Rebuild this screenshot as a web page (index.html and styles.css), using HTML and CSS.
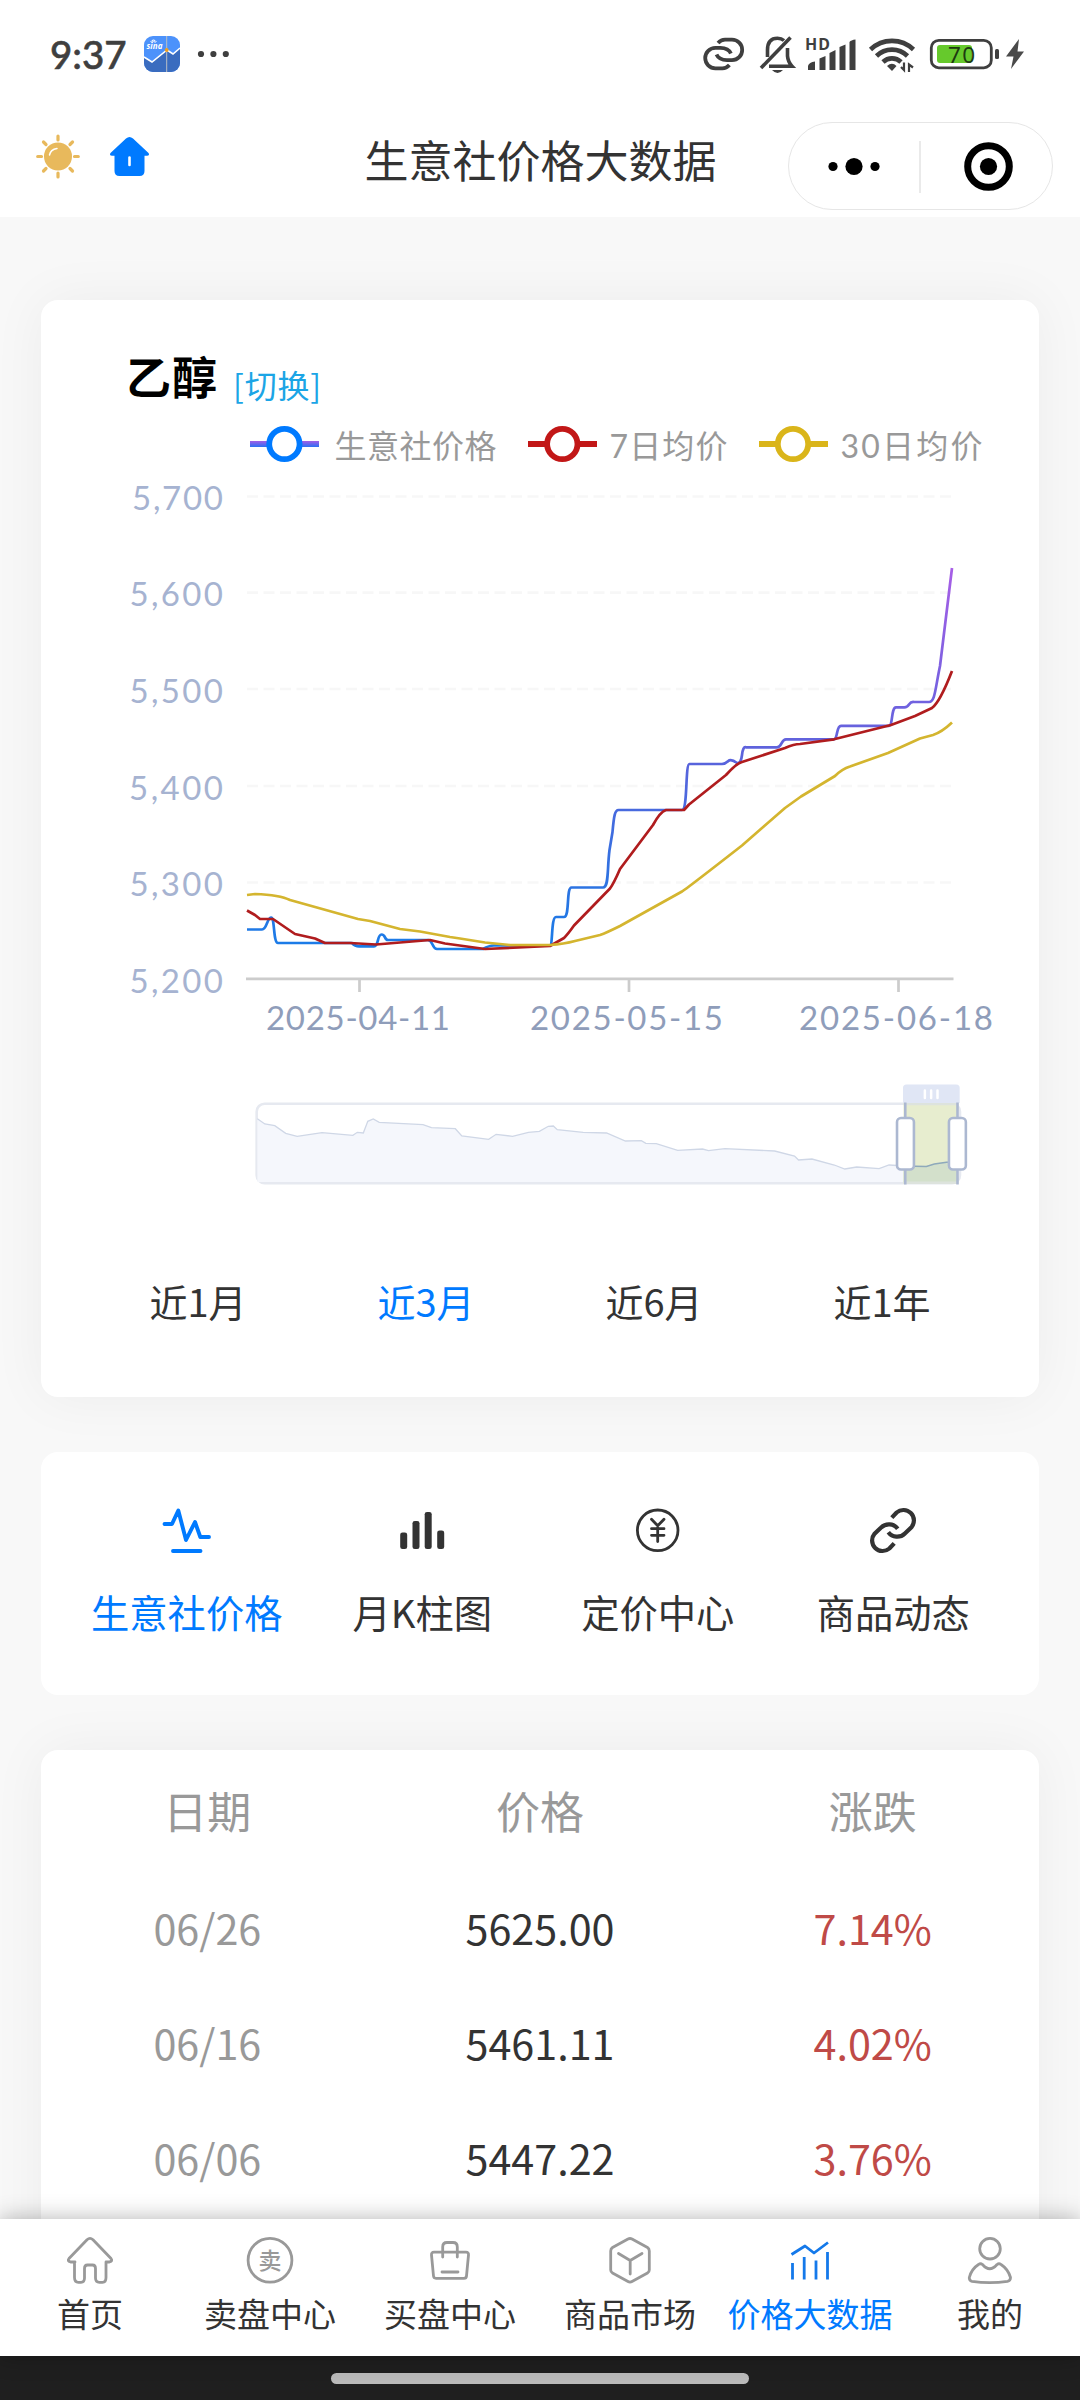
FILE: index.html
```html
<!DOCTYPE html>
<html lang="zh-CN">
<head>
<meta charset="utf-8">
<title>生意社价格大数据</title>
<link rel="stylesheet" href="styles.css">
</head>
<body>
<div class="app">
  <header class="header">
    <div class="status">
      <span class="clock">9:37</span>
      <svg class="app-badge" viewBox="0 0 36 36" width="36" height="36">
        <defs><clipPath id="badge"><rect width="36" height="36" rx="9"/></clipPath></defs>
        <g clip-path="url(#badge)">
          <rect width="36" height="36" fill="#4c92fb"/>
          <path d="M0 21 8 26 23 14 29 18 36 12V36H0z" fill="#3a6cbf"/>
          <path d="M0 21 8 26 23 14 29 18 36 12" fill="none" stroke="#fff" stroke-width="1.6"/>
          <path d="M22.7 0V36" stroke="#b9bfc6" stroke-width="1"/>
          <circle cx="22.7" cy="14" r="1.9" fill="#f0a020"/>
          <path d="M6.500 6q3-4 6 0M7.500 6.500q2-2.500 4 0" fill="none" stroke="#fff" stroke-width="1"/>
          <text x="2.500" y="13" class="badge-text" textLength="16">sina</text>
        </g>
      </svg>
      <svg class="more" viewBox="197 34 34 40" width="34" height="40" fill="#3f3f3f"><circle cx="201" cy="54" r="3.100"/><circle cx="213.400" cy="54" r="3.100"/><circle cx="225.800" cy="54" r="3.100"/></svg>
      <div class="status-right">
        <svg viewBox="700 34 56 40" width="56" height="40" fill="none" stroke="#3f3f3f" stroke-width="3.800">
          <path id="ring" d="M718 43Q721 39.700 725 39.700H732A10.200 10.200 0 0 1 732 60.100H727Q719 60 716.500 54.500"/>
          <use href="#ring" transform="rotate(180 723.700 54)"/>
        </svg>
        <svg viewBox="756 34 46 40" width="46" height="40" fill="none" stroke="#3f3f3f" stroke-width="3.600">
          <path d="M767.500 57V50Q767.500 38.300 777.500 38.300Q781.500 38.300 784 40.500M787.500 48V56Q788 62 792 66.200H769"/>
          <path d="M761 68 790.500 37.500"/><path d="M772 70H783Q777.500 76 772 70z" fill="#3f3f3f" stroke="none"/>
        </svg>
        <svg viewBox="802 34 62 40" width="62" height="40" fill="#3f3f3f">
          <text x="805" y="50" class="hd" textLength="25">HD</text>
          <path d="M808 70V66Q809 62 815 61.500V70zM819.500 70V58.500L825.500 56V70zM829.500 70V53L835.500 50V70zM839.500 70V47L845.500 44.500V70zM849.500 70V42Q851 40 855.500 39.500V70z"/>
        </svg>
        <svg viewBox="864 34 62 40" width="62" height="40" fill="none" stroke="#3f3f3f" stroke-width="4.600">
          <path d="M870.500 49.500A31 31 0 0 1 913.500 49.500M876.500 56A22 22 0 0 1 907.500 56M883 62A13 13 0 0 1 901 62"/>
          <path d="M887 66Q892 61.500 896.500 66L892 71z" fill="#3f3f3f" stroke="none"/>
          <path d="M904 62.500V70L901 67M909 72V64.500L913 67.500" stroke-width="2.200"/>
        </svg>
        <svg viewBox="926 34 102 40" width="102" height="40">
          <rect x="931.300" y="40.300" width="60" height="27.500" rx="7.500" fill="#fff" stroke="#3f3f3f" stroke-width="2.800"/>
          <rect x="937" y="45" width="35" height="18" rx="3" fill="#66c92c"/>
          <rect x="995" y="49" width="4" height="10" rx="1.500" fill="#3f3f3f"/>
          <text x="948" y="62.500" class="battery" textLength="27">70</text>
          <path d="M1019 39 1006 56.500H1013.500L1011 69 1024 51.500H1017.500z" fill="#4a4a4a"/>
        </svg>
      </div>
    </div>
    <div class="nav">
      <svg class="sun" viewBox="34 132 48 48" width="48" height="48" fill="none" stroke="#e8b95c" stroke-width="3.200" stroke-linecap="round">
        <circle cx="58" cy="156.500" r="14" fill="#e8b95c" stroke="none"/>
        <path d="M58 136V140M58 173V177M37.700 156.500H41.500M74.500 156.500H78.300M43.500 142 46 144.500M70 168.500 72.500 171M43.500 171 46 168.500M70 144.500 72.500 142"/>
        <path d="M49.500 155Q50.500 149.500 57 148.500" stroke="#fff" stroke-width="1.500"/>
      </svg>
      <svg class="home" viewBox="106 132 48 48" width="48" height="48">
        <path d="M126 138.500Q129.500 135.500 133 138.500L148.500 153Q150 155.500 147 155.700H144.500V171Q144.500 176 139.500 176H119.500Q114.500 176 114.500 171V155.700H112Q109 155.500 110.500 153z" fill="#007aff"/>
        <path d="M129.500 157.500V165" stroke="#fff" stroke-width="2.600" stroke-linecap="round"/>
      </svg>
      <h1 class="nav-title">生意社价格大数据</h1>
      <div class="capsule">
        <svg viewBox="788 122 265 87" width="265" height="87">
          <circle cx="833" cy="165.500" r="4.600"/><circle cx="854" cy="165.500" r="8.600"/><circle cx="875" cy="165.500" r="4.600"/>
          <path d="M920 140V192" stroke="#e3e3e3" stroke-width="1.500"/>
          <circle cx="988.500" cy="165.500" r="20.800" fill="none" stroke="#000" stroke-width="7"/><circle cx="988.500" cy="165.500" r="8.600"/>
        </svg>
      </div>
    </div>
  </header>

  <main class="main">
    <section class="card chart-card">
      <div class="chart-head"><h2 class="product">乙醇</h2><a class="switch">[切换]</a></div>
      <svg class="chart" viewBox="83 410 914 790" width="914" height="790">
        <defs>
          <linearGradient id="price" gradientUnits="userSpaceOnUse" x1="0" y1="568" x2="0" y2="949"><stop offset="0" stop-color="#a75ee6"/><stop offset=".5" stop-color="#5a63dc"/><stop offset=".85" stop-color="#2a74e2"/><stop offset="1" stop-color="#1a7ce8"/></linearGradient>
          <linearGradient id="key" gradientUnits="userSpaceOnUse" x1="0" y1="441" x2="0" y2="447"><stop offset="0" stop-color="#a25ee6"/><stop offset="1" stop-color="#2a70f4"/></linearGradient>
        </defs>
        <g stroke-width="5.800">
          <rect x="250" y="441" width="69" height="6" fill="url(#key)"/><circle cx="284.400" cy="444" r="15.200" fill="#fff" stroke="#007aff"/>
          <path d="M528 444H597" stroke="#c21717"/><circle cx="562.300" cy="444" r="15.200" fill="#fff" stroke="#c21717"/>
          <path d="M759 444H828" stroke="#dab51a"/><circle cx="793" cy="444" r="15.200" fill="#fff" stroke="#dab51a"/>
        </g>
        <g class="legend">
          <text x="334.500" y="457.500" textLength="162">生意社价格</text>
          <text x="609.500" y="457.500" textLength="118">7日均价</text>
          <text x="840.500" y="457.500" textLength="142">30日均价</text>
        </g>
        <g class="grid"><path d="M247 496.500H952M247 592.700H952M247 689H952M247 786H952M247 882.500H952"/></g>
        <g class="y-axis">
          <text x="132" y="510" textLength="91">5,700</text>
          <text x="129.500" y="606.200" textLength="93.500">5,600</text>
          <text x="129.500" y="702.500" textLength="93.500">5,500</text>
          <text x="129" y="799.500" textLength="94">5,400</text>
          <text x="129.500" y="896" textLength="93.500">5,300</text>
          <text x="129.500" y="992.500" textLength="93.500">5,200</text>
        </g>
        <path d="M246 978.800H953.500M359.500 978.800V992M629 978.800V992M898.500 978.800V992" stroke="#ccc" stroke-width="2.700" fill="none"/>
        <g class="x-axis">
          <text x="266" y="1030" textLength="184">2025-04-11</text>
          <text x="530" y="1030" textLength="193">2025-05-15</text>
          <text x="799" y="1030" textLength="194">2025-06-18</text>
        </g>
        <g fill="none" stroke-width="2.700" stroke-linejoin="round">
          <path stroke="url(#price)" d="M247 929.500H262C267 929.500 267 918 271 917.500S273 943 278 943H352Q355 946.300 359 946.300H374C379 946.300 377 934.500 381.500 934.500S384 940 388 940H428C433 940 432 949 437 949H483Q489 945.500 494 945.500H550C553 945 551 917 556 917H564C570 917 566 887.500 571.500 887.500H603C609 887.500 607 870 609.500 850L612.500 832C614 815 615 810 618.500 810H682C688 810 685 764 689.500 764H722Q725 764 728 761.200T737 763Q741 764 742 755T746 747.300H777C782 747.300 781 739.300 786 739.300H834C838 739.300 836 725.800 841 725.800H889C893 725.800 891 707.500 896 707.300H904Q907 707.500 909 704.500T914 702H929C935 702 935 690 940 666L952 568"/>
          <path stroke="#b01c1e" d="M247 910.500 255 915 260 919H273L295 934 315 938.500 325 943H350L376 944.500 430 940 445 943.500 485 949 550 946 564 938Q568 934 574 925.500L610 888.500Q614 883 620 869L653 825Q660 812 666 810H684L689 804.500 726 775Q737 763 742 762L785 748Q794 744 800 744L834 739.300 891 725 915 716 932 708Q940 702 952 671"/>
          <path stroke="#d4b52f" d="M247 895 255 894Q280 895 290 900L358 919 370 921 400 929 420 931.500 450 937 460 938.500 485 942.500 510 945H550Q564 944 575 941L600 935Q606 933 620 926L682 891.500Q685 890 742 845.500L785 808 801 796.500 835 776Q842 769 850 766.500L888 753 920 738.500 933 735Q942 732 952 722.500"/>
        </g>
        <g fill="none" transform="translate(1.200 0) scale(.9948 1)">
          <rect x="256.800" y="1103.700" width="707" height="79.500" rx="8" stroke="#e6e9f0" stroke-width="2.600"/>
          <path fill="#f5f7fc" d="M257.500 1118.700 265 1124 275 1125.700 286 1133.300 297.500 1136.300 322.500 1132.700 353.500 1135.300 358 1132.300 364 1133 368.500 1121.300 374 1119 380 1122.300 424 1124.700 432.500 1127.700 456.500 1128.700 463 1136 490 1139.300 497.500 1134.300 514 1136.300 530 1132.300 541 1131.300 550 1126.300 555 1126 559 1129.700 585 1132.300 608.500 1133 627.500 1141 643.500 1140.700 648 1143.300 658.500 1143.700 680 1150.300 705 1149 711 1150.700 727.500 1148.700 777.500 1151 797.500 1156 801.500 1160 815 1159 837.500 1165 848 1169 860 1167 882.500 1168.700 892.500 1165 908.500 1166V1182H257.500z"/>
          <path stroke="#cfd7e6" stroke-width="1.300" d="M257.500 1118.700 265 1124 275 1125.700 286 1133.300 297.500 1136.300 322.500 1132.700 353.500 1135.300 358 1132.300 364 1133 368.500 1121.300 374 1119 380 1122.300 424 1124.700 432.500 1127.700 456.500 1128.700 463 1136 490 1139.300 497.500 1134.300 514 1136.300 530 1132.300 541 1131.300 550 1126.300 555 1126 559 1129.700 585 1132.300 608.500 1133 627.500 1141 643.500 1140.700 648 1143.300 658.500 1143.700 680 1150.300 705 1149 711 1150.700 727.500 1148.700 777.500 1151 797.500 1156 801.500 1160 815 1159 837.500 1165 848 1169 860 1167 882.500 1168.700 892.500 1165 908.500 1166"/>
          <path d="M907 1103H962V1184H907z" fill="#e7edcf"/>
          <path d="M907 1166 930 1166.500 938 1164 952 1162 961 1160V1182H907z" fill="#d3e0cb"/>
          <path d="M907 1166 930 1166.500 938 1164 952 1162 961 1160" stroke="#8ea9bb" stroke-width="1.400"/>
          <path d="M907 1104H962M907 1182.700H962" stroke="#dde3dd" stroke-width="2.600"/>
          <path d="M906.500 1103V1088Q906.500 1084.500 910 1084.500H960Q963.500 1084.500 963.500 1088V1103z" fill="#e0e6f5"/>
          <path d="M928.500 1090.500V1098M934.800 1090.500V1098M941.200 1090.500V1098" stroke="#fff" stroke-width="2.500" stroke-linecap="round"/>
          <g stroke="#acb8d1" stroke-width="2.600">
            <path d="M908.800 1102.500V1184.500M961.300 1102.500V1184.500"/>
            <rect x="900.500" y="1118" width="17" height="51.500" rx="4" fill="#fff"/>
            <rect x="952.700" y="1118" width="17" height="51.500" rx="4" fill="#fff"/>
          </g>
        </g>
      </svg>
      <nav class="ranges"><a>近1月</a><a class="active">近3月</a><a>近6月</a><a>近1年</a></nav>
    </section>

    <section class="card tools">
      <a class="tool active">
        <svg viewBox="161 1504 52 52" width="52" height="52" fill="none" stroke="currentColor" stroke-width="3.900" stroke-linecap="round" stroke-linejoin="round"><path d="M164.500 1524H172L178.300 1510.500 186 1540 195 1522 200.300 1537H209M173 1551H200.500"/></svg>
        <span>生意社价格</span>
      </a>
      <a class="tool">
        <svg viewBox="396 1504 52 52" width="52" height="52" fill="currentColor"><rect x="400.200" y="1532.500" width="7" height="16.500" rx="2.300"/><rect x="412.500" y="1521" width="7" height="28" rx="2.300"/><rect x="424.700" y="1512" width="7" height="37" rx="2.300"/><rect x="437.200" y="1530.500" width="7" height="18.500" rx="2.300"/></svg>
        <span>月K柱图</span>
      </a>
      <a class="tool">
        <svg viewBox="632 1504 52 52" width="52" height="52" fill="none" stroke="currentColor" stroke-width="2.800" stroke-linecap="round"><circle cx="657.700" cy="1530.300" r="20.300"/><path d="M651.500 1519.200 657.700 1525.800 664 1519.200M657.700 1525.800V1541.500M651.500 1528.700H664M651.500 1535.300H664"/></svg>
        <span>定价中心</span>
      </a>
      <a class="tool">
        <svg viewBox="867.500 1504 52 52" width="52" height="52" fill="none" stroke="currentColor" stroke-width="4.200"><path id="link" d="M892.300 1517.700 897.100 1512.500A10.500 10.500 0 0 1 911.900 1527.300L905.400 1533.400A11 11 0 0 1 888.800 1532.200"/><use href="#link" transform="rotate(180 893.500 1530.500)"/></svg>
        <span>商品动态</span>
      </a>
    </section>

    <section class="card table-card">
      <div class="row head"><span>日期</span><span>价格</span><span>涨跌</span></div>
      <div class="row"><span class="date">06/26</span><span>5625.00</span><span class="up">7.14%</span></div>
      <div class="row"><span class="date">06/16</span><span>5461.11</span><span class="up">4.02%</span></div>
      <div class="row"><span class="date">06/06</span><span>5447.22</span><span class="up">3.76%</span></div>
    </section>
  </main>

  <nav class="tabbar">
    <a class="tab">
      <svg viewBox="64 2234 52 52" width="52" height="52"><path d="M75 2262H70.500Q67 2261 69 2258.500L87 2239.700Q90 2237 93 2239.700L111 2258.500Q113 2261 109.500 2262H106V2277.500Q106 2282.300 102.500 2282.300H99.500Q95.500 2282.300 95.500 2278V2268.500Q95.500 2265 92.500 2265H87.500Q84.500 2265 84.500 2268.500V2278Q84.500 2282.300 81 2282.300H78.500Q74.500 2282.300 74.500 2277.500V2262z"/></svg>
      <span>首页</span>
    </a>
    <a class="tab">
      <svg viewBox="244 2234 52 52" width="52" height="52"><circle cx="270" cy="2260.300" r="21.900"/><text x="270" y="2269" class="seal" text-anchor="middle">卖</text></svg>
      <span>卖盘中心</span>
    </a>
    <a class="tab">
      <svg viewBox="424 2234 52 52" width="52" height="52"><path d="M434 2252.200H466Q468.700 2252.200 468.500 2255L466.500 2276Q466.300 2278.300 464 2278.300H436Q433.700 2278.300 433.500 2276L431.500 2255Q431.300 2252.200 434 2252.200zM442.700 2257V2247Q442.700 2242.500 447 2242.500H453Q457.300 2242.500 457.300 2247V2257M442 2272H458"/></svg>
      <span>买盘中心</span>
    </a>
    <a class="tab">
      <svg viewBox="604 2234 52 52" width="52" height="52"><path d="M628 2239Q630 2238 632 2239L647.500 2247.500Q649.300 2248.700 649.300 2251V2270Q649.300 2272 647.500 2273L632 2281.500Q630 2282.700 628 2281.500L612.500 2273Q610.700 2272 610.700 2270V2251Q610.700 2248.700 612.500 2247.500zM618.500 2253.500 630.200 2260.500 642 2253.500M630.200 2260.500V2274"/></svg>
      <span>商品市场</span>
    </a>
    <a class="tab active">
      <svg viewBox="784 2234 52 52" width="52" height="52"><path d="M791.500 2254.500 805 2246 814 2253 828 2242.500M792.500 2263V2279.500M804.200 2257V2279.500M816 2260.500V2279.500M827.500 2252V2279.500"/></svg>
      <span>价格大数据</span>
    </a>
    <a class="tab">
      <svg viewBox="964 2234 52 52" width="52" height="52"><circle cx="990" cy="2248.700" r="10.300"/><path d="M978.500 2264.500Q980.500 2263 982.500 2264.500Q989.700 2273 997 2264.500Q999 2263 1001 2264.500Q1008 2269 1010.500 2277.500Q1010.500 2280.700 1007.500 2281.300Q989.700 2284 972 2281.300Q969 2280.700 969.300 2277.500Q971.500 2269 978.500 2264.500z"/></svg>
      <span>我的</span>
    </a>
  </nav>
  <footer class="gesture"><i class="pill"></i></footer>
</div>
</body>
</html>
```
FILE: styles.css
```css
* { box-sizing: border-box; }
body { margin: 0; font-family: "Noto Sans CJK SC", sans-serif; color: #333; background: #f8f8f8; }
svg { display: block; flex: none; }
h1, h2 { margin: 0; }
.app { width: 1080px; height: 2400px; display: flex; flex-direction: column; overflow: hidden; }

.header { height: 217px; flex: none; background: #fff; }
.status { height: 108px; padding: 0 52px 0 50px; display: flex; align-items: center; }
.clock { width: 94px; font: 500 38.5px/40px Lato, sans-serif; color: #3f3f3f; -webkit-text-stroke: .6px #3f3f3f; white-space: nowrap; }
.more { margin-left: 17px; }
.status-right { display: flex; margin-left: auto; }
.badge-text { font: italic bold 8px "Open Sans", sans-serif; fill: #fff; }
.hd { font: bold 16px "Noto Sans", sans-serif; }
.battery { font: 22.5px "Noto Sans", sans-serif; fill: #1d3a10; }

.nav { height: 109px; padding: 14px 27px 7px 34px; display: flex; align-items: flex-start; }
.sun, .home { margin-top: 10px; }
.home { margin-left: 24px; }
.nav-title { width: 352px; margin-left: 210.5px; font-size: 44px; font-weight: 400; line-height: 74px; white-space: nowrap; }
.capsule { width: 265px; height: 88px; margin-left: auto; border: 1px solid #e6e6e6; border-radius: 44px; display: flex; justify-content: center; align-items: center; }

.main { flex: 1; min-height: 0; overflow: hidden; padding: 83px 41px 0; display: flex; flex-direction: column; gap: 55px; }
.card { flex: none; background: #fff; border-radius: 17px; position: relative; }
.chart-card { height: 1097px; padding: 0 42px; box-shadow: 0 0 55px rgba(0, 0, 0, .05); }
.chart-head { height: 110px; padding: 43px 0 0 43px; display: flex; align-items: flex-start; gap: 15px; }
.product { font-size: 45px; line-height: 66px; letter-spacing: 1px; font-weight: 700; color: #000; }
.switch { margin-top: 17px; font-size: 32px; line-height: 48px; letter-spacing: .8px; color: #1ba5e6; }
.legend { font: 32px Lato, "Noto Sans CJK SC", sans-serif; fill: #999; }
.grid { stroke: #f7f7f7; stroke-width: 2.7; stroke-dasharray: 11 5.5; fill: none; }
.y-axis { font: 33px Lato, sans-serif; fill: #a6b3d1; }
.x-axis { font: 33px Lato, sans-serif; fill: #8f9dba; }
.ranges { height: 187px; padding: 13px 0 0 1px; display: grid; grid-template-columns: repeat(4, 228px); place-items: center; font-size: 38px; }
.active { color: #007aff; }

.tools { height: 243px; padding: 52px 28px 0; display: grid; grid-template-columns: repeat(4, 1fr); }
.tool { display: flex; flex-direction: column; align-items: center; font-size: 38.3px; line-height: 60px; gap: 26px; white-space: nowrap; }

.table-card { height: 560px; box-shadow: 0 0 55px rgba(0, 0, 0, .05); }
.row { height: 115px; display: grid; grid-template-columns: repeat(3, 1fr); place-items: center; font-size: 41.3px; line-height: 60px; }
.row.head { height: 119px; font-size: 44px; color: #999; }
.date { color: #999; }
.up { color: #bf4a47; }

.tabbar { flex: none; height: 137px; position: relative; padding-top: 15px; background: #fff; box-shadow: 0 0 22px rgba(0, 0, 0, .3); display: grid; grid-template-columns: repeat(6, 1fr); }
.tab { display: flex; flex-direction: column; align-items: center; font-size: 33px; line-height: 48px; gap: 3px; white-space: nowrap; }
.tab svg { fill: none; stroke: #999; stroke-width: 2.8; stroke-linecap: round; stroke-linejoin: round; }
.tab.active svg { stroke: #1479ea; stroke-linecap: butt; }
.tab .seal { font-size: 23px; font-weight: 500; fill: #999; stroke: none; }
.gesture { flex: none; height: 44px; background: #1f1f1f; display: flex; justify-content: center; padding-top: 17px; }
.pill { width: 418px; height: 11px; border-radius: 6px; background: #bababa; }
```
